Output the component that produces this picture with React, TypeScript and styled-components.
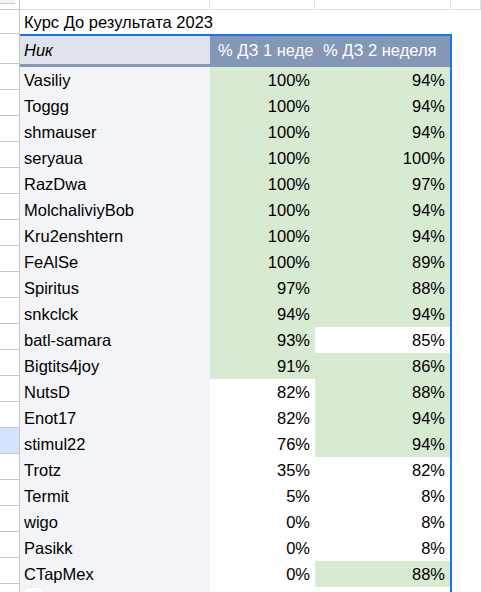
import React from "react";
import styled, { createGlobalStyle, css } from "styled-components";

const Global = createGlobalStyle`
  html, body { margin: 0; padding: 0; background: #fff; }
  body { font-family: "Liberation Sans", Arial, sans-serif; overflow: hidden; }
`;

const GRID = "#e1e1e1";
const GUTTER_LINE = "#c4c7c5";
const BLUE = "#1a73e8";
const SLATE = "#8597b6";
const GREEN = "#d9ead3";

const Sheet = styled.div`
  display: flex;
  flex-direction: column;
  width: 481px;
  height: 592px;
  overflow: hidden;
  font-size: 16.5px;
  color: #000;
`;

const Row = styled.div<{ $h: number }>`
  display: flex;
  height: ${(p) => p.$h}px;
  flex-shrink: 0;
`;

const Gutter = styled.div<{ $active?: boolean; $cap?: boolean }>`
  position: relative;
  box-sizing: border-box;
  width: 20px;
  flex-shrink: 0;
  border-right: 1px solid ${GUTTER_LINE};
  border-bottom: 1px solid ${GUTTER_LINE};
  background: ${(p) => (p.$active ? "#d3e3fd" : "#fff")};
  ${(p) =>
    p.$cap &&
    css`
      &::before {
        content: "";
        position: absolute;
        left: 0;
        top: 0;
        width: 15px;
        height: 3px;
        background: #f1f3f4;
        border-bottom: 1px solid ${GUTTER_LINE};
      }
    `}
`;

const EmptyCell = styled.div<{ $w?: number }>`
  box-sizing: border-box;
  ${(p) => (p.$w ? `width: ${p.$w}px; flex-shrink: 0;` : "flex: 1;")}
  border-right: 1px solid ${GRID};
  border-bottom: 1px solid ${GRID};
`;

const TitleCell = styled.div`
  box-sizing: border-box;
  width: 432px;
  flex-shrink: 0;
  padding-left: 4px;
  display: flex;
  align-items: center;
  white-space: nowrap;
`;

const Filler = styled.div`
  flex: 1;
`;

const Table = styled.div`
  box-sizing: border-box;
  width: 432px;
  flex-shrink: 0;
  border-top: 2px solid ${BLUE};
  border-right: 2px solid ${BLUE};
  display: flex;
  flex-direction: column;
`;

const TableWrap = styled.div`
  display: flex;
`;

const GutterCol = styled.div`
  display: flex;
  flex-direction: column;
  width: 20px;
  flex-shrink: 0;
`;

const GutterCell = styled(Gutter)<{ $h: number }>`
  height: ${(p) => p.$h}px;
  flex-shrink: 0;
`;

const TRow = styled.div<{ $h: number }>`
  display: flex;
  height: ${(p) => p.$h}px;
  flex-shrink: 0;
`;

const HeadRow = styled(TRow)`
  border-bottom: 3px solid ${SLATE};
`;

const HeadName = styled.div`
  width: 190px;
  flex-shrink: 0;
  background: #dfe3eb;
  font-style: italic;
  padding-left: 4px;
  box-sizing: border-box;
  display: flex;
  align-items: center;
`;

const HeadCol = styled.div<{ $w: number }>`
  box-sizing: border-box;
  width: ${(p) => p.$w}px;
  flex-shrink: 0;
  background: ${SLATE};
  color: #fff;
  padding-left: 8px;
  display: flex;
  align-items: center;
  white-space: nowrap;
`;

const NameCell = styled.div`
  box-sizing: border-box;
  width: 190px;
  flex-shrink: 0;
  background: #f3f4f7;
  padding-left: 4px;
  display: flex;
  align-items: center;
  white-space: nowrap;
`;

const ValueCell = styled.div<{ $w: number; $good: boolean }>`
  box-sizing: border-box;
  width: ${(p) => p.$w}px;
  flex-shrink: 0;
  background: ${(p) => (p.$good ? GREEN : "#fff")};
  padding-right: 5px;
  display: flex;
  align-items: center;
  justify-content: flex-end;
`;

const Blob = styled.div`
  position: absolute;
  left: 24px;
  top: 588px;
  width: 20px;
  height: 10px;
  border-radius: 10px;
  background: #fff;
  box-shadow: 0 0 2px rgba(0, 0, 0, 0.08);
`;

type Entry = [string, number, number];

const data: Entry[] = [
  ["Vasiliy", 100, 94],
  ["Toggg", 100, 94],
  ["shmauser", 100, 94],
  ["seryaua", 100, 100],
  ["RazDwa", 100, 97],
  ["MolchaliviyBob", 100, 94],
  ["Kru2enshtern", 100, 94],
  ["FeAlSe", 100, 89],
  ["Spiritus", 97, 88],
  ["snkclck", 94, 94],
  ["batl-samara", 93, 85],
  ["Bigtits4joy", 91, 86],
  ["NutsD", 82, 88],
  ["Enot17", 82, 94],
  ["stimul22", 76, 94],
  ["Trotz", 35, 82],
  ["Termit", 5, 8],
  ["wigo", 0, 8],
  ["Pasikk", 0, 8],
  ["CTapMex", 0, 88],
];

const ROW = 26;
const good = (v: number) => v >= 86;

export default function App() {
  return (
    <>
      <Global />
      <Sheet>
        <Row $h={10}>
          <Gutter $cap />
          <EmptyCell $w={190} />
          <EmptyCell $w={105} />
          <EmptyCell $w={136} />
          <EmptyCell />
        </Row>
        <Row $h={24}>
          <Gutter />
          <TitleCell>Курс До результата 2023</TitleCell>
          <Filler />
        </Row>
        <TableWrap>
          <GutterCol>
            <GutterCell $h={30} />
            {data.map(([name], i) => (
              <GutterCell key={name} $h={ROW} $active={i === 14} />
            ))}
            <GutterCell $h={ROW} />
          </GutterCol>
          <Table>
            <HeadRow $h={28}>
              <HeadName>Ник</HeadName>
              <HeadCol $w={105}>% ДЗ 1 неде</HeadCol>
              <HeadCol $w={135}>% ДЗ 2 неделя</HeadCol>
            </HeadRow>
            {data.map(([name, a, b]) => (
              <TRow key={name} $h={ROW}>
                <NameCell>{name}</NameCell>
                <ValueCell $w={105} $good={good(a)}>
                  {a}%
                </ValueCell>
                <ValueCell $w={135} $good={good(b)}>
                  {b}%
                </ValueCell>
              </TRow>
            ))}
            <TRow $h={ROW}>
              <NameCell />
              <ValueCell $w={105} $good={false} />
              <ValueCell $w={135} $good={false} />
            </TRow>
          </Table>
          <Filler />
        </TableWrap>
        <Blob />
      </Sheet>
    </>
  );
}
